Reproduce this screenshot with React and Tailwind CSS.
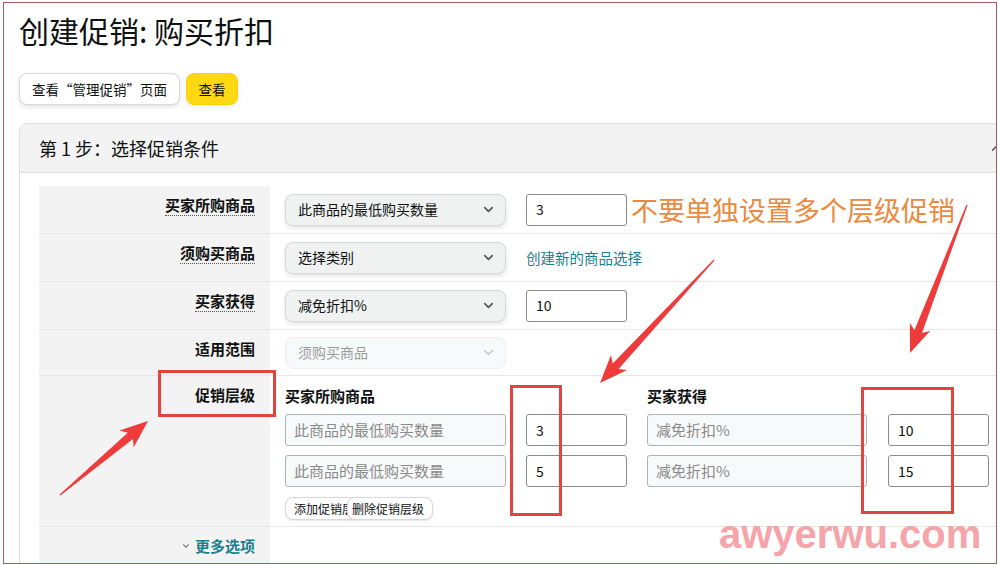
import React from "react";
import { ChevronDown, ChevronUp } from "lucide-react";

const font = { fontFamily: '"Noto Sans CJK SC", "Noto Sans", sans-serif' };

// tapered annotation arrow, tail -> tip
function arrowPoints(tx, ty, hx, hy) {
  const dx = hx - tx;
  const dy = hy - ty;
  const len = Math.hypot(dx, dy);
  const ux = dx / len;
  const uy = dy / len;
  const nx = -uy;
  const ny = ux;
  const hl = 28;
  const hw = 11;
  const sw = 4;
  const bx = hx - ux * hl;
  const by = hy - uy * hl;
  const jx = bx + ux * 5;
  const jy = by + uy * 5;
  const pts = [
    [tx + nx * 0.6, ty + ny * 0.6],
    [jx + nx * sw, jy + ny * sw],
    [bx + nx * hw, by + ny * hw],
    [hx, hy],
    [bx - nx * hw, by - ny * hw],
    [jx - nx * sw, jy - ny * sw],
    [tx - nx * 0.6, ty - ny * 0.6],
  ];
  return pts.map((p) => p.map((v) => v.toFixed(1)).join(",")).join(" ");
}

function Select({ value, disabled }) {
  return (
    <div
      className={
        disabled
          ? "w-[221px] h-[32px] rounded-[8px] bg-[#f7fafa] border border-[#eef0f0] flex items-center justify-between pl-[12px] pr-[9px] text-[14px] text-[#9a9a9a]"
          : "w-[221px] h-[32px] rounded-[8px] bg-[#f0f2f2] border border-[#d5d9d9] shadow-[0_2px_4px_rgba(0,0,0,0.12)] flex items-center justify-between pl-[12px] pr-[9px] text-[14px] text-[#0f1111]"
      }
    >
      <span>{value}</span>
      <ChevronDown size={15} strokeWidth={2.6} className={disabled ? "text-[#c8cccc]" : "text-[#555]"} />
    </div>
  );
}

function NumInput({ value }) {
  return (
    <div className="w-[101px] h-[32px] border border-[#888c8c] rounded-[3px] flex items-center pl-[9px] text-[14px] text-[#0f1111] bg-white">
      {value}
    </div>
  );
}

function Placeholder({ text, w }) {
  return (
    <div className={`${w} h-[32px] border border-[#adb1b8] rounded-[3px] bg-[#f7fafa] flex items-center pl-[8px] text-[15px] text-[#8a8a8a]`}>
      {text}
    </div>
  );
}

function Label({ children, dotted = true }) {
  return (
    <div className="w-[231px] shrink-0 bg-[#f3f3f3] flex items-start justify-end pr-[15px] pt-[8px]">
      <span
        className={
          dotted
            ? "text-[15px] leading-[21px] font-bold text-[#0f1111] border-b border-dotted border-[#555]"
            : "text-[15px] leading-[21px] font-bold text-[#0f1111]"
        }
      >
        {children}
      </span>
    </div>
  );
}

export default function App() {
  return (
    <div className="relative w-[998px] h-[565px] overflow-hidden bg-white" style={font}>
      <div className="mt-[2px] ml-[3px] w-[994px] h-[562px] border border-[#b4585c] overflow-hidden">
        <div className="pl-[15px] pt-[8px]">
          <h1 className="text-[30px] leading-[38px] text-[#0f1111]">创建促销: 购买折扣</h1>

          <div className="flex mt-[24px]">
            <div className="w-[161px] h-[32px] rounded-[8px] border border-[#d5d9d9] bg-white shadow-[0_2px_5px_rgba(15,17,17,0.12)] flex items-center justify-center text-[13.5px] text-[#0f1111]">
              查看“管理促销”页面
            </div>
            <div className="ml-[6px] w-[52px] h-[32px] rounded-[8px] border border-[#fcd200] bg-[#ffd814] shadow-[0_2px_5px_rgba(213,217,217,0.5)] flex items-center justify-center text-[13.5px] text-[#0f1111]">
              查看
            </div>
          </div>

          <div className="mt-[18px] w-[998px] border border-[#dddddd] rounded-t-[8px]">
            <div className="h-[49px] bg-[#f3f3f3] border-b border-[#dddddd] rounded-t-[8px] flex items-center justify-between pl-[19px] pr-[10px]">
              <span className="text-[18px] text-[#0f1111]">第 1 步：选择促销条件</span>
              <ChevronUp size={18} className="text-[#555]" />
            </div>

            <div className="pt-[13px] pl-[19px]">
              <div className="flex h-[48px] border-b border-[#e7e7e7]">
                <Label>买家所购商品</Label>
                <div className="flex items-center pl-[15px]">
                  <Select value="此商品的最低购买数量" />
                  <div className="ml-[20px]">
                    <NumInput value="3" />
                  </div>
                  <span className="ml-[4px] text-[27px] leading-[32px] text-[#ea8a3f] whitespace-nowrap">不要单独设置多个层级促销</span>
                </div>
              </div>

              <div className="flex h-[48px] border-b border-[#e7e7e7]">
                <Label>须购买商品</Label>
                <div className="flex items-center pl-[15px]">
                  <Select value="选择类别" />
                  <span className="ml-[20px] text-[14.5px] text-[#1b7f8f]">创建新的商品选择</span>
                </div>
              </div>

              <div className="flex h-[48px] border-b border-[#e7e7e7]">
                <Label>买家获得</Label>
                <div className="flex items-center pl-[15px]">
                  <Select value="减免折扣%" />
                  <div className="ml-[20px]">
                    <NumInput value="10" />
                  </div>
                </div>
              </div>

              <div className="flex h-[46px] border-b border-[#e7e7e7]">
                <Label dotted={false}>适用范围</Label>
                <div className="flex items-center pl-[15px]">
                  <Select value="须购买商品" disabled />
                </div>
              </div>

              <div className="flex h-[151px] border-b border-[#e7e7e7]">
                <Label dotted={false}>促销层级</Label>
                <div className="flex flex-col pl-[15px] pt-[10px]">
                  <div className="flex text-[15px] leading-[20px] font-bold text-[#0f1111]">
                    <span className="w-[362px]">买家所购商品</span>
                    <span>买家获得</span>
                  </div>
                  <div className="flex mt-[8px]">
                    <Placeholder text="此商品的最低购买数量" w="w-[221px]" />
                    <div className="ml-[20px]">
                      <NumInput value="3" />
                    </div>
                    <div className="ml-[20px]">
                      <Placeholder text="减免折扣%" w="w-[220px]" />
                    </div>
                    <div className="ml-[21px]">
                      <NumInput value="10" />
                    </div>
                  </div>
                  <div className="flex mt-[9px]">
                    <Placeholder text="此商品的最低购买数量" w="w-[221px]" />
                    <div className="ml-[20px]">
                      <NumInput value="5" />
                    </div>
                    <div className="ml-[20px]">
                      <Placeholder text="减免折扣%" w="w-[220px]" />
                    </div>
                    <div className="ml-[21px]">
                      <NumInput value="15" />
                    </div>
                  </div>
                  <div className="flex mt-[10px]">
                    <div className="h-[23px] pl-[8px] pr-[2px] rounded-[8px] border border-[#d5d9d9] bg-white shadow-[0_1px_3px_rgba(0,0,0,0.1)] flex items-center text-[12px] text-[#0f1111]">
                      添加促销层
                    </div>
                    <div className="ml-[-10px] h-[23px] pl-[4px] pr-[8px] rounded-[8px] border border-[#d5d9d9] bg-white shadow-[0_1px_3px_rgba(0,0,0,0.1)] flex items-center text-[12px] text-[#0f1111]">
                      删除促销层级
                    </div>
                  </div>
                </div>
              </div>

              <div className="flex h-[40px]">
                <div className="w-[231px] shrink-0 bg-[#f3f3f3] flex justify-end items-start pr-[15px] pt-[8px]">
                  <span className="flex items-center text-[15px] leading-[21px] font-bold text-[#1b7f8f]">
                    <ChevronDown size={10} strokeWidth={2.5} className="mr-[4px] text-[#555]" />
                    更多选项
                  </span>
                </div>
              </div>
            </div>
          </div>
        </div>
      </div>

      {/* annotations */}
      <div className="absolute left-[158px] top-[370px] w-[118px] h-[47px] border-[3px] border-[#e0453f]" />
      <div className="absolute left-[510px] top-[385px] w-[52px] h-[131px] border-[3px] border-[#e0453f]" />
      <div className="absolute left-[861px] top-[387px] w-[93px] h-[127px] border-[3px] border-[#e0453f]" />

      <svg className="absolute left-0 top-0" width="998" height="565">
        <polygon points={arrowPoints(60, 495, 148, 421)} fill="#ee3b3b" />
        <polygon points={arrowPoints(714, 260, 600, 383)} fill="#ee3b3b" />
        <polygon points={arrowPoints(967, 205, 910, 353)} fill="#ee3b3b" />
      </svg>

      <div
        className="absolute left-[719px] top-[510px] text-[40px] leading-[48px] font-bold text-[#f5a5aa]"
        style={{ fontFamily: '"Liberation Sans", Arial, sans-serif' }}
      >
        awyerwu.com
      </div>
    </div>
  );
}
